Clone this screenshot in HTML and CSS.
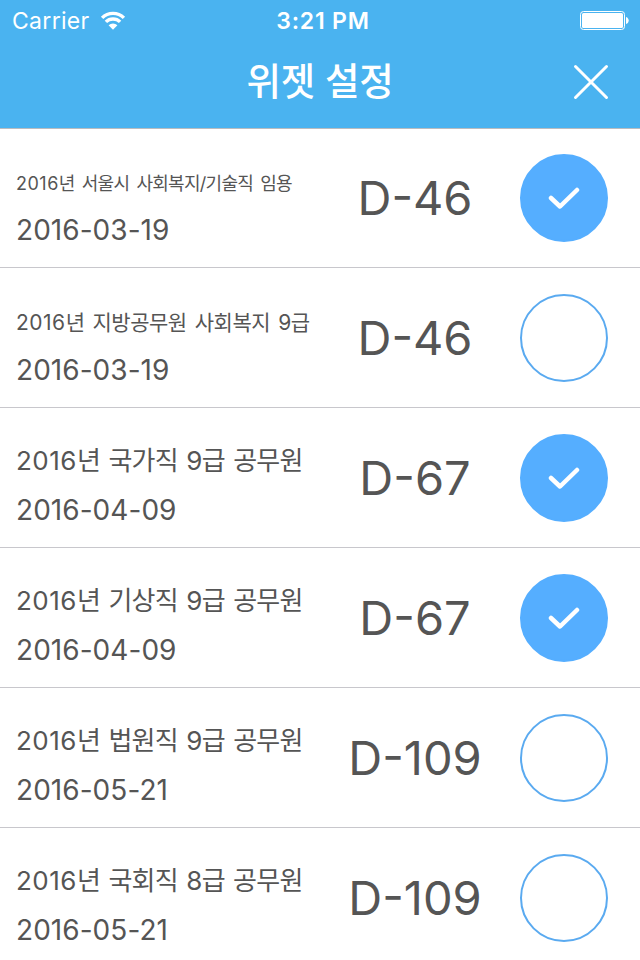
FILE: index.html
```html
<!DOCTYPE html>
<html lang="ko">
<head>
  <meta charset="UTF-8" />
  <meta name="viewport" content="width=device-width, initial-scale=1" />
  <title>위젯 설정</title>
  <link rel="stylesheet" href="styles.css">
</head>
<body>

  <header class="header">
    <div class="status-bar">
      <div class="carrier">
        <span class="carrier-name">Carrier</span>
        <svg class="wifi" width="26" height="20" viewBox="0 0 26 20">
          <path d="M2.1 6.9a15.4 15.4 0 0 1 21.8 0" />
          <path d="M5.9 10.9a10 10 0 0 1 14.2 0" />
          <path class="dot" d="M13 18.8l-4.4-4.5a6.2 6.2 0 0 1 8.8 0z" />
        </svg>
      </div>
      <div class="time">3:21 PM</div>
      <svg class="battery" width="49" height="20" viewBox="0 0 49 20">
        <rect class="battery-case" x="0.5" y="0.5" width="44" height="18" rx="3" />
        <rect x="2" y="2" width="41" height="15" rx="1.5" />
        <path d="M46 6c3.6 1 3.6 6 0 7z" />
      </svg>
    </div>
    <div class="nav-bar">
      <h1 class="title">위젯 설정</h1>
      <button class="close" aria-label="닫기">
        <svg width="36" height="36" viewBox="0 0 36 36"><path d="M2.5 2.5l31 31M33.5 2.5l-31 31" /></svg>
      </button>
    </div>
  </header>

  <ul class="exam-list">
    <li class="exam">
      <div class="info"><div class="name name-s"><span class="num">2016</span>년 서울시 사회복지/기술직 임용</div><div class="date">2016-03-19</div></div>
      <div class="dday">D-46</div>
      <div class="check checked"><svg width="32" height="24" viewBox="0 0 32 24"><path d="M3 12l9 8.500L29 4" /></svg></div>
    </li>
    <li class="exam">
      <div class="info"><div class="name name-m"><span class="num">2016</span>년 지방공무원 사회복지 9급</div><div class="date">2016-03-19</div></div>
      <div class="dday">D-46</div>
      <div class="check"></div>
    </li>
    <li class="exam">
      <div class="info"><div class="name"><span class="num">2016</span>년 국가직 9급 공무원</div><div class="date">2016-04-09</div></div>
      <div class="dday">D-67</div>
      <div class="check checked"><svg width="32" height="24" viewBox="0 0 32 24"><path d="M3 12l9 8.500L29 4" /></svg></div>
    </li>
    <li class="exam">
      <div class="info"><div class="name"><span class="num">2016</span>년 기상직 9급 공무원</div><div class="date">2016-04-09</div></div>
      <div class="dday">D-67</div>
      <div class="check checked"><svg width="32" height="24" viewBox="0 0 32 24"><path d="M3 12l9 8.500L29 4" /></svg></div>
    </li>
    <li class="exam">
      <div class="info"><div class="name"><span class="num">2016</span>년 법원직 9급 공무원</div><div class="date">2016-05-21</div></div>
      <div class="dday">D-109</div>
      <div class="check"></div>
    </li>
    <li class="exam">
      <div class="info"><div class="name"><span class="num">2016</span>년 국회직 8급 공무원</div><div class="date">2016-05-21</div></div>
      <div class="dday">D-109</div>
      <div class="check"></div>
    </li>
  </ul>

</body>
</html>
```
FILE: styles.css
```css
* { box-sizing: border-box; }
body {
  margin: 0; height: 960px; overflow: hidden;
  background: #fff; color: #555;
  font-family: Inter, "Noto Sans CJK KR", sans-serif;
}

.header { height: 128px; background: #4ab3f0; color: #fff; }
.status-bar {
  display: grid; grid-template-columns: 1fr auto 1fr; align-items: center;
  height: 40px; padding: 1px 11px 0 12px;
}
.carrier { display: flex; align-items: center; gap: 10px; font-size: 23px; letter-spacing: 0.3px; }
.wifi { fill: none; stroke: #fff; stroke-width: 3.4; }
.wifi .dot { fill: #fff; stroke: none; }
.time { padding-left: 5px; font-size: 23px; font-weight: 600; letter-spacing: 0.8px; }
.battery { justify-self: end; fill: #fff; }
.battery-case { fill: none; stroke: #fff; }

.nav-bar {
  display: grid; grid-template-columns: 66px 1fr 66px; align-items: center;
  height: 84px; padding: 0 16px;
}
.title { grid-column: 2; margin: 0; text-align: center; font-size: 37.5px; font-weight: 500; line-height: 84px; letter-spacing: -0.2px; }
.close { justify-self: end; padding: 0 15px; border: 0; background: none; line-height: 0; }
.close svg { stroke: #fff; stroke-width: 3; stroke-linecap: round; }

.exam-list { margin: 0; padding: 0; list-style: none; box-shadow: inset 0 1px #b9bcc0; }
.exam {
  display: grid; grid-template-columns: 310px 210px 88px; align-items: center;
  height: 140px; border-bottom: 1px solid #c8c7cc;
}
.info { padding: 14px 0 0 16px; white-space: nowrap; }
.name { height: 49px; line-height: 49px; font-size: 26px; letter-spacing: -0.7px; word-spacing: 1.6px; }
.name-m { padding-top: 2px; font-size: 21px; letter-spacing: -0.5px; word-spacing: 2.7px; }
.name-s { padding-top: 3px; font-size: 18px; letter-spacing: -0.7px; word-spacing: 2.7px; }
.num { letter-spacing: 0.5px; }
.date { height: 49px; line-height: 50px; font-size: 28px; letter-spacing: 0.05px; }
.dday { text-align: center; font-size: 47px; font-weight: 380; }
.check {
  display: flex; align-items: center; justify-content: center;
  width: 88px; height: 88px; border: 2px solid #5aaaf0; border-radius: 50%;
}
.checked { background: #55aeff; border-color: #55aeff; }
.check svg { fill: none; stroke: #fff; stroke-width: 4.5; stroke-linecap: round; stroke-linejoin: round; }
```
